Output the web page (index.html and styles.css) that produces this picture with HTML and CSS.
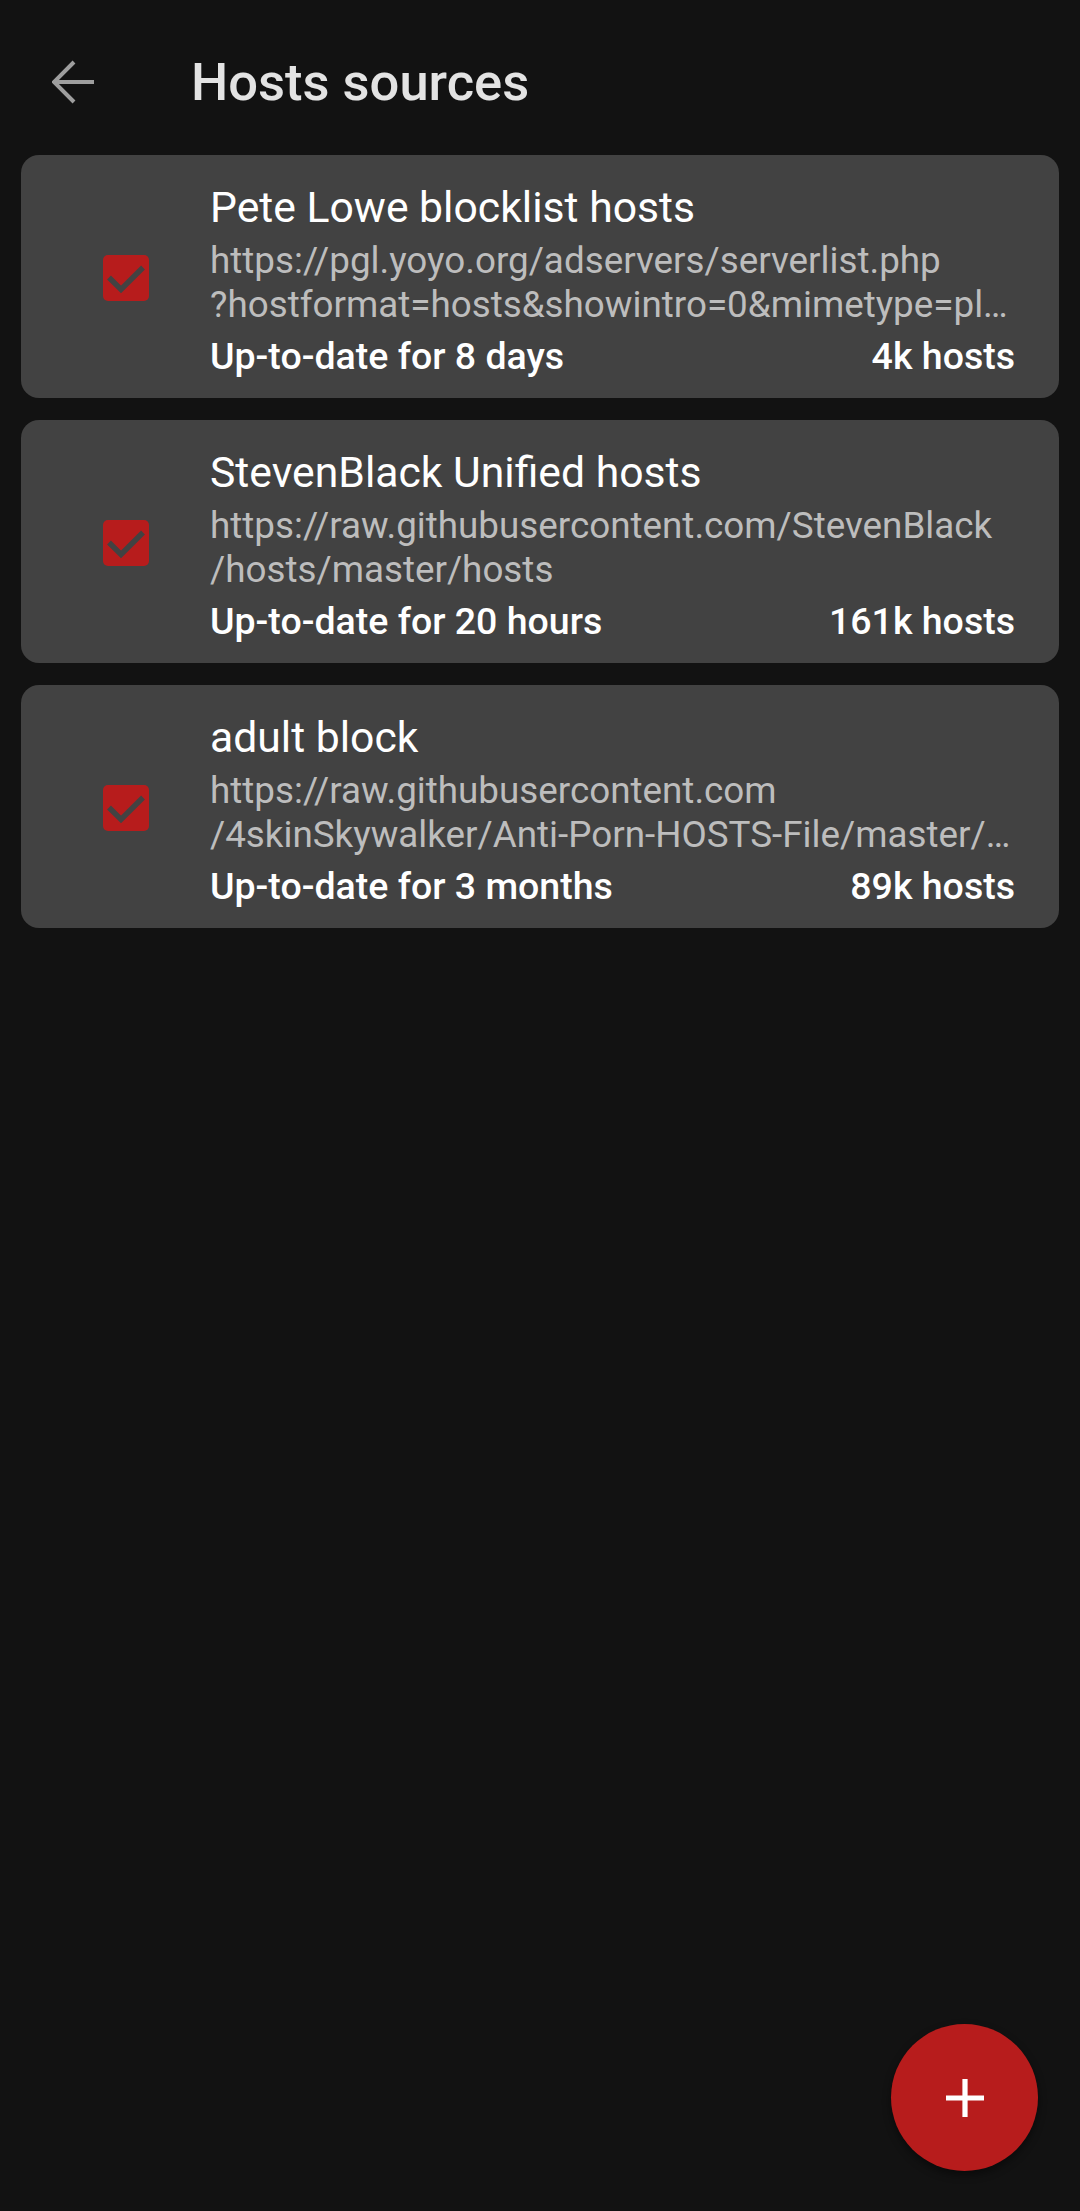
FILE: index.html
```html
<!DOCTYPE html>
<html lang="en">
<head>
<meta charset="utf-8">
<title>Hosts sources</title>
<link rel="stylesheet" href="styles.css">
</head>
<body>
<header class="toolbar">
  <button class="back" aria-label="Back">
    <svg width="44" height="44" viewBox="0 0 44 44"><path d="M22 2 L2 22 L22 42 M2 22 H42" fill="none" stroke="#9e9e9e" stroke-width="4"/></svg>
  </button>
  <h1 class="title">Hosts sources</h1>
</header>

<main class="list">
  <section class="card">
    <div class="check">
      <svg width="46" height="46" viewBox="0 0 46 46"><rect x="0" y="0" width="46" height="46" rx="5" fill="#b71c1c"/><path d="M6 22.5 L18 34.5 L40 12.5" fill="none" stroke="#424242" stroke-width="5.4"/></svg>
    </div>
    <div class="info">
      <div class="name">Pete Lowe blocklist hosts</div>
      <div class="url">
        <span class="url-line">https://pgl.yoyo.org/adservers/serverlist.php</span>
        <span class="url-line">?hostformat=hosts&amp;showintro=0&amp;mimetype=plaintext</span>
      </div>
      <div class="meta"><span>Up-to-date for 8 days</span><span>4k hosts</span></div>
    </div>
  </section>

  <section class="card">
    <div class="check">
      <svg width="46" height="46" viewBox="0 0 46 46"><rect x="0" y="0" width="46" height="46" rx="5" fill="#b71c1c"/><path d="M6 22.5 L18 34.5 L40 12.5" fill="none" stroke="#424242" stroke-width="5.4"/></svg>
    </div>
    <div class="info">
      <div class="name">StevenBlack Unified hosts</div>
      <div class="url">
        <span class="url-line">https://raw.githubusercontent.com/StevenBlack</span>
        <span class="url-line">/hosts/master/hosts</span>
      </div>
      <div class="meta"><span>Up-to-date for 20 hours</span><span>161k hosts</span></div>
    </div>
  </section>

  <section class="card">
    <div class="check">
      <svg width="46" height="46" viewBox="0 0 46 46"><rect x="0" y="0" width="46" height="46" rx="5" fill="#b71c1c"/><path d="M6 22.5 L18 34.5 L40 12.5" fill="none" stroke="#424242" stroke-width="5.4"/></svg>
    </div>
    <div class="info">
      <div class="name">adult block</div>
      <div class="url">
        <span class="url-line">https://raw.githubusercontent.com</span>
        <span class="url-line">/4skinSkywalker/Anti-Porn-HOSTS-File/master/HOSTS.txt</span>
      </div>
      <div class="meta"><span>Up-to-date for 3 months</span><span>89k hosts</span></div>
    </div>
  </section>
</main>

<button class="fab" aria-label="Add">
  <svg width="38" height="38" viewBox="0 0 38 38"><path d="M16.4 0 H21.6 V16.4 H38 V21.6 H21.6 V38 H16.4 V21.6 H0 V16.4 H16.4 Z" fill="#ffffff"/></svg>
</button>
</body>
</html>
```

FILE: styles.css
```css
* { box-sizing: border-box; }

html, body {
  margin: 0;
  padding: 0;
  background: #121212;
  font-family: Roboto, "Noto Sans", "Liberation Sans", sans-serif;
  color: #ffffff;
}

body {
  width: 1080px;
  min-height: 2211px;
}

.toolbar {
  height: 155px;
  padding-top: 9px;
  display: flex;
  align-items: center;
}

.back {
  background: none;
  border: 0;
  padding: 0;
  margin-left: 52px;
  width: 44px;
  height: 44px;
  display: flex;
}

.title {
  margin: 0 0 0 95px;
  font-size: 52.5px;
  font-weight: 500;
  color: #e3e3e3;
  letter-spacing: 0;
}

.list {
  display: flex;
  flex-direction: column;
  gap: 22px;
  padding: 0 21px;
}

.card {
  background: #424242;
  border-radius: 18px;
  display: flex;
  align-items: center;
  padding: 23px 44px 20px 82px;
  height: 243px;
}

.check {
  width: 46px;
  height: 46px;
  flex: none;
  margin-right: 61px;
  display: flex;
  align-self: center;
}

.info {
  flex: 1;
  min-width: 0;
  display: flex;
  flex-direction: column;
  align-self: flex-start;
}

.name {
  font-size: 42.7px;
  line-height: 58px;
  color: #ffffff;
  white-space: nowrap;
}

.url {
  display: flex;
  flex-direction: column;
  margin-top: 3px;
  font-size: 36.8px;
  line-height: 44px;
  color: #bdbdbd;
}

.url-line {
  display: block;
  white-space: nowrap;
  overflow: hidden;
  text-overflow: ellipsis;
}

.meta {
  display: flex;
  justify-content: space-between;
  margin-top: 7px;
  font-size: 37.5px;
  line-height: 44px;
  font-weight: 500;
  color: #ffffff;
}

.fab {
  position: fixed;
  right: 42px;
  bottom: 40px;
  width: 147px;
  height: 147px;
  border-radius: 50%;
  border: 0;
  padding: 0;
  background: #b71c1c;
  box-shadow: 0 4px 8px rgba(0, 0, 0, 0.45);
  display: flex;
  align-items: center;
  justify-content: center;
}
```
